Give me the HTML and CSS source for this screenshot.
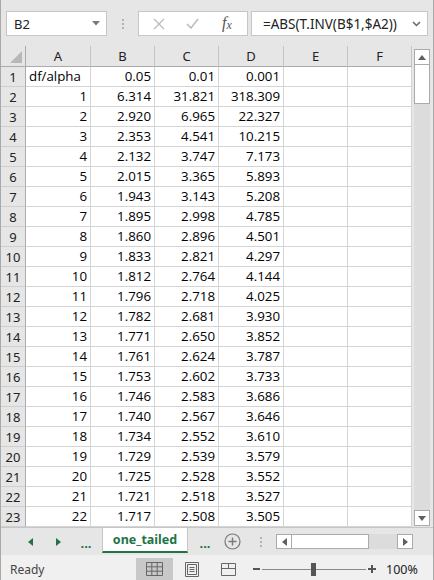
FILE: index.html
```html
<!DOCTYPE html>
<html lang="en">
<head>
    <meta charset="UTF-8">
    <title>one_tailed</title>
    <link rel="stylesheet" href="styles.css">
</head>
<body>
    <div class="window">
        <div class="formula-bar">
            <div class="name-box">
                <span>B2</span>
                <svg class="caret" width="8" height="5" viewBox="0 0 8 5"><path d="M0 0h8L4 4.5z" fill="#7a7a7a"/></svg>
            </div>
            <div class="grip"><i></i><i></i><i></i></div>
            <div class="fx-buttons">
                <svg width="12" height="12" viewBox="0 0 12 12"><path d="M1 1l10 10M11 1L1 11" stroke="#bdbdbd" stroke-width="1.4" fill="none"/></svg>
                <svg width="13" height="11" viewBox="0 0 13 11"><path d="M1 6l4 4 7-9" stroke="#bdbdbd" stroke-width="1.6" fill="none"/></svg>
                <span class="fx">f<sub>x</sub></span>
            </div>
            <div class="formula-input">
                <span>=ABS(T.INV(B$1,$A2))</span>
                <svg class="chevron" width="9" height="6" viewBox="0 0 9 6"><path d="M1 1l3.5 3.5L8 1" stroke="#666" stroke-width="1.5" fill="none"/></svg>
            </div>
        </div>

        <div class="sheet">
            <div class="grid" id="grid">
                <!-- cells are built by the script below -->
            </div>
            <div class="vscroll">
                <div class="sb-btn"><svg width="8" height="5" viewBox="0 0 8 5"><path d="M0 5h8L4 0z" fill="#606060"/></svg></div>
                <div class="sb-thumb"></div>
                <div class="sb-track"></div>
                <div class="sb-btn"><svg width="8" height="5" viewBox="0 0 8 5"><path d="M0 0h8L4 5z" fill="#606060"/></svg></div>
            </div>
        </div>

        <div class="tab-bar">
            <div class="tab-nav">
                <svg width="5" height="8" viewBox="0 0 5 8"><path d="M5 0v8L0 4z" fill="#217346"/></svg>
            </div>
            <div class="tab-nav">
                <svg width="5" height="8" viewBox="0 0 5 8"><path d="M0 0v8l5-4z" fill="#217346"/></svg>
            </div>
            <div class="tab-nav more">...</div>
            <div class="sheet-tab">one_tailed</div>
            <div class="tab-more">...</div>
            <div class="add-sheet">
                <svg width="17" height="17" viewBox="0 0 17 17"><circle cx="8.5" cy="8.5" r="7.5" stroke="#7a7a7a" stroke-width="1.2" fill="none"/><path d="M8.5 4.5v8M4.5 8.5h8" stroke="#7a7a7a" stroke-width="1.4"/></svg>
            </div>
            <div class="grip small"><i></i><i></i><i></i></div>
            <div class="hscroll">
                <div class="hs-btn"><svg width="5" height="8" viewBox="0 0 5 8"><path d="M5 0v8L0 4z" fill="#606060"/></svg></div>
                <div class="hs-thumb"></div>
                <div class="hs-track"></div>
                <div class="hs-btn right"><svg width="5" height="8" viewBox="0 0 5 8"><path d="M0 0v8l5-4z" fill="#606060"/></svg></div>
            </div>
        </div>

        <div class="status-bar">
            <div class="ready">Ready</div>
            <div class="view-btn active">
                <svg width="17" height="14" viewBox="0 0 17 14"><path d="M.5.5h16v13H.5zM.5 4.8h16M.5 9.2h16M5.8.5v13M11.2.5v13" stroke="#666" fill="none"/></svg>
            </div>
            <div class="view-btn">
                <svg width="14" height="15" viewBox="0 0 14 15"><path d="M.5.5h13v14H.5zM2.5 2.5h9v10h-9zM4.5 5.5h5M4.5 7.5h5M4.5 9.5h5" stroke="#666" fill="none"/></svg>
            </div>
            <div class="view-btn">
                <svg width="15" height="13" viewBox="0 0 15 13"><path d="M.5.5h14v12H.5zM.5 5.5h14M7.5.5v5" stroke="#666" fill="none"/></svg>
            </div>
            <div class="zoom">
                <span class="zoom-minus"></span>
                <div class="zoom-line"><span class="zoom-thumb"></span></div>
                <span class="zoom-plus"></span>
                <span class="zoom-value">100%</span>
            </div>
        </div>
    </div>
    <script>
        const rows = [
            ['df/alpha', '0.05', '0.01', '0.001'],
            ['1', '6.314', '31.821', '318.309'],
            ['2', '2.920', '6.965', '22.327'],
            ['3', '2.353', '4.541', '10.215'],
            ['4', '2.132', '3.747', '7.173'],
            ['5', '2.015', '3.365', '5.893'],
            ['6', '1.943', '3.143', '5.208'],
            ['7', '1.895', '2.998', '4.785'],
            ['8', '1.860', '2.896', '4.501'],
            ['9', '1.833', '2.821', '4.297'],
            ['10', '1.812', '2.764', '4.144'],
            ['11', '1.796', '2.718', '4.025'],
            ['12', '1.782', '2.681', '3.930'],
            ['13', '1.771', '2.650', '3.852'],
            ['14', '1.761', '2.624', '3.787'],
            ['15', '1.753', '2.602', '3.733'],
            ['16', '1.746', '2.583', '3.686'],
            ['17', '1.740', '2.567', '3.646'],
            ['18', '1.734', '2.552', '3.610'],
            ['19', '1.729', '2.539', '3.579'],
            ['20', '1.725', '2.528', '3.552'],
            ['21', '1.721', '2.518', '3.527'],
            ['22', '1.717', '2.508', '3.505']
        ];

        function buildGrid() {
            let grid = document.getElementById('grid');
            let html = '<div class="corner"></div>';

            ['A', 'B', 'C', 'D', 'E', 'F'].forEach(col => {
                html += `<div class="col-head">${col}</div>`;
            });

            rows.forEach((row, i) => {
                html += `<div class="row-head">${i + 1}</div>`;
                for (let c = 0; c < 6; c++) {
                    let value = row[c] || '';
                    let isNumber = value !== '' && !isNaN(value);
                    html += `<div class="cell${isNumber ? ' num' : ''}">${value}</div>`;
                }
            });

            grid.innerHTML = html;
        }

        buildGrid();
    </script>
</body>
</html>
```

FILE: styles.css
```css
* {
    box-sizing: border-box;
}
body {
    margin: 0;
    font-family: "Noto Sans", sans-serif;
    color: #222;
}
.window {
    width: 434px;
    height: 580px;
    display: flex;
    flex-direction: column;
    background-color: #e6e6e6;
    border-left: 1px solid #a9a9a9;
    border-right: 1px solid #a9a9a9;
    overflow: hidden;
}

/* formula bar */
.formula-bar {
    height: 46px;
    flex: none;
    display: flex;
    align-items: flex-start;
    padding: 11px 5px 0 5px;
}
.name-box {
    width: 101px;
    height: 25px;
    display: flex;
    align-items: center;
    justify-content: space-between;
    padding: 0 6px 0 7px;
    background-color: #fff;
    border: 1px solid #c6c6c6;
    font-size: 13px;
}
.grip {
    width: 4px;
    height: 25px;
    margin-left: 14px;
    display: flex;
    flex-direction: column;
    align-items: center;
    justify-content: center;
    gap: 2px;
}
.grip i {
    width: 2px;
    height: 2px;
    background-color: #b3b3b3;
}
.fx-buttons {
    width: 110px;
    height: 25px;
    margin-left: 13px;
    display: flex;
    align-items: center;
    gap: 21px;
    padding-left: 14px;
    background-color: #fff;
    border: 1px solid #c6c6c6;
}
.fx {
    margin-left: 2px;
    font-family: "Liberation Serif", serif;
    font-style: italic;
    font-size: 16px;
    color: #555;
}
.fx sub {
    font-size: 12px;
    vertical-align: -1px;
}
.formula-input {
    flex: 1;
    height: 25px;
    margin-left: 3px;
    display: flex;
    align-items: center;
    justify-content: space-between;
    padding: 0 6px 0 11px;
    background-color: #fff;
    border: 1px solid #c6c6c6;
    font-size: 13.5px;
}

/* sheet grid */
.sheet {
    flex: none;
    height: 481px;
    display: flex;
}
.grid {
    display: grid;
    grid-template-columns: 25px 65px 64px 64px 65px 64px 64px;
    grid-template-rows: 21px;
    grid-auto-rows: 20px;
    background-color: #fff;
}
.corner,
.col-head,
.row-head {
    background-color: #e6e6e6;
    font-size: 13px;
    color: #222;
}
.corner {
    position: relative;
    border-right: 1px solid #ababab;
    border-bottom: 1px solid #ababab;
}
.corner::after {
    content: "";
    position: absolute;
    right: 3px;
    bottom: 3px;
    border-left: 12px solid transparent;
    border-bottom: 12px solid #b8b8b8;
}
.col-head {
    display: flex;
    align-items: center;
    justify-content: center;
    border-right: 1px solid #c4c4c4;
    border-bottom: 1px solid #ababab;
}
.row-head {
    display: flex;
    align-items: center;
    justify-content: center;
    border-right: 1px solid #ababab;
    border-bottom: 1px solid #cfcfcf;
}
.cell {
    padding: 0 3px;
    line-height: 19px;
    font-family: "Open Sans", sans-serif;
    font-size: 13.3px;
    color: #000;
    white-space: nowrap;
    border-right: 1px solid #d4d4d4;
    border-bottom: 1px solid #d4d4d4;
}
.cell.num {
    text-align: right;
}

/* vertical scroll bar */
.vscroll {
    flex: 1;
    display: flex;
    flex-direction: column;
    padding: 3px 3px 1px 2px;
}
.sb-btn {
    height: 16px;
    flex: none;
    display: flex;
    align-items: center;
    justify-content: center;
    background-color: #fff;
    border: 1px solid #ababab;
}
.sb-thumb {
    height: 40px;
    flex: none;
    margin-top: -1px;
    background-color: #fff;
    border: 1px solid #ababab;
}
.sb-track {
    flex: 1;
    background-color: #dcdcdc;
}

/* sheet tabs */
.tab-bar {
    height: 28px;
    flex: none;
    display: flex;
    align-items: center;
    padding-left: 15px;
    border-top: 1px solid #c6c6c6;
}
.tab-nav {
    width: 28px;
    display: flex;
    justify-content: center;
}
.more,
.tab-more {
    color: #217346;
    font-weight: bold;
    font-size: 13px;
    line-height: 1;
    margin-top: 4px;
}
.sheet-tab {
    align-self: flex-start;
    width: 86px;
    height: 25px;
    margin-left: 2px;
    display: flex;
    align-items: center;
    justify-content: center;
    background-color: #fff;
    border-left: 1px solid #c6c6c6;
    border-right: 1px solid #c6c6c6;
    border-bottom: 2px solid #217346;
    color: #217346;
    font-weight: bold;
    font-size: 12.5px;
}
.tab-more {
    width: 30px;
    text-align: center;
    margin-left: 2px;
}
.add-sheet {
    width: 24px;
    display: flex;
    justify-content: center;
}
.grip.small {
    margin-left: 10px;
    width: 14px;
    height: 16px;
}
.hscroll {
    width: 137px;
    height: 15px;
    margin-left: 8px;
    display: flex;
}
.hs-btn {
    width: 16px;
    display: flex;
    align-items: center;
    justify-content: center;
    background-color: #fff;
    border: 1px solid #ababab;
}
.hs-thumb {
    width: 78px;
    margin-left: -1px;
    background-color: #fff;
    border: 1px solid #ababab;
}
.hs-track {
    flex: 1;
    background-color: #dcdcdc;
}

/* status bar */
.status-bar {
    flex: 1;
    display: flex;
    align-items: stretch;
    background-color: #f0f0f0;
    padding-top: 3px;
    font-size: 12px;
    color: #444;
}
.ready {
    width: 135px;
    padding-left: 9px;
    display: flex;
    align-items: center;
}
.view-btn {
    width: 37px;
    display: flex;
    align-items: center;
    justify-content: center;
}
.view-btn.active {
    background-color: #c8c8c8;
}
.zoom {
    display: flex;
    align-items: center;
    margin-left: 6px;
}
.zoom-minus {
    width: 7px;
    height: 2px;
    background-color: #555;
}
.zoom-line {
    position: relative;
    width: 104px;
    height: 1px;
    margin: 0 2px;
    background-color: #888;
}
.zoom-thumb {
    position: absolute;
    left: 49px;
    top: -6px;
    width: 5px;
    height: 13px;
    background-color: #555;
}
.zoom-plus {
    position: relative;
    width: 8px;
    height: 8px;
}
.zoom-plus::before,
.zoom-plus::after {
    content: "";
    position: absolute;
    background-color: #555;
}
.zoom-plus::before {
    left: 0;
    top: 3px;
    width: 8px;
    height: 2px;
}
.zoom-plus::after {
    left: 3px;
    top: 0;
    width: 2px;
    height: 8px;
}
.zoom-value {
    margin-left: 10px;
    font-size: 12.5px;
    color: #222;
}
```
